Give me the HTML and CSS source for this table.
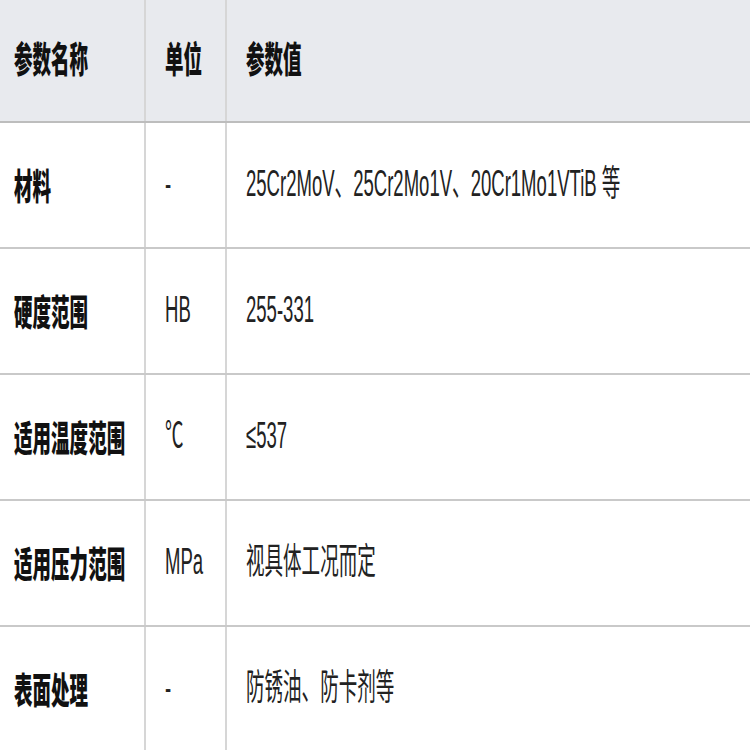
FILE: index.html
```html
<!DOCTYPE html>
<html lang="zh">
<head>
<meta charset="utf-8">
<title>参数表</title>
<link rel="stylesheet" href="styles.css">
</head>
<body>
<div class="table">
  <div class="row head">
    <div class="cell c1"><span class="t">参数名称</span></div>
    <div class="cell c2"><span class="t">单位</span></div>
    <div class="cell c3"><span class="t">参数值</span></div>
  </div>
  <div class="row">
    <div class="cell c1"><span class="t lab">材料</span></div>
    <div class="cell c2"><span class="t">-</span></div>
    <div class="cell c3"><span class="t">25Cr2MoV、25Cr2Mo1V、20Cr1Mo1VTiB 等</span></div>
  </div>
  <div class="row">
    <div class="cell c1"><span class="t lab">硬度范围</span></div>
    <div class="cell c2"><span class="t">HB</span></div>
    <div class="cell c3"><span class="t">255-331</span></div>
  </div>
  <div class="row">
    <div class="cell c1"><span class="t lab">适用温度范围</span></div>
    <div class="cell c2"><span class="t">℃</span></div>
    <div class="cell c3"><span class="t">≤537</span></div>
  </div>
  <div class="row">
    <div class="cell c1"><span class="t lab">适用压力范围</span></div>
    <div class="cell c2"><span class="t">MPa</span></div>
    <div class="cell c3"><span class="t">视具体工况而定</span></div>
  </div>
  <div class="row">
    <div class="cell c1"><span class="t lab">表面处理</span></div>
    <div class="cell c2"><span class="t">-</span></div>
    <div class="cell c3"><span class="t">防锈油、防卡剂等</span></div>
  </div>
</div>
</body>
</html>
```
FILE: styles.css
```css
html, body {
  margin: 0;
  padding: 0;
  background: #ffffff;
}
body {
  width: 750px;
  height: 750px;
  overflow: hidden;
  font-family: "Liberation Sans", "Noto Sans CJK SC", sans-serif;
  color: #222222;
}
.table {
  display: flex;
  flex-direction: column;
  width: 750px;
  overflow: hidden;
}
.row {
  display: grid;
  grid-template-columns: 146px 81px minmax(0, 1fr);
  height: 124px;
  border-bottom: 2px solid #c9c9c9;
}
.row.head {
  height: 121px;
  background: #e8eaee;
  border-bottom-color: #bdbdbd;
}
.cell {
  display: flex;
  align-items: center;
  min-width: 0;
  overflow: hidden;
  padding-bottom: 3px;
}
.head .cell {
  padding-bottom: 8px;
}
.c1 {
  padding-left: 14px;
  border-right: 2px solid #d6d6d6;
}
.c2 {
  padding-left: 19px;
  border-right: 2px solid #d6d6d6;
}
.c3 {
  padding-left: 19px;
}
.t {
  display: inline-block;
  white-space: nowrap;
  font-size: 36px;
  line-height: 40px;
  transform: scaleX(0.515);
  transform-origin: left center;
  font-weight: 400;
  color: #222222;
}
.head .t,
.t.lab {
  font-family: "Noto Sans CJK SC", sans-serif;
  font-weight: 900;
  color: #111111;
}
```
